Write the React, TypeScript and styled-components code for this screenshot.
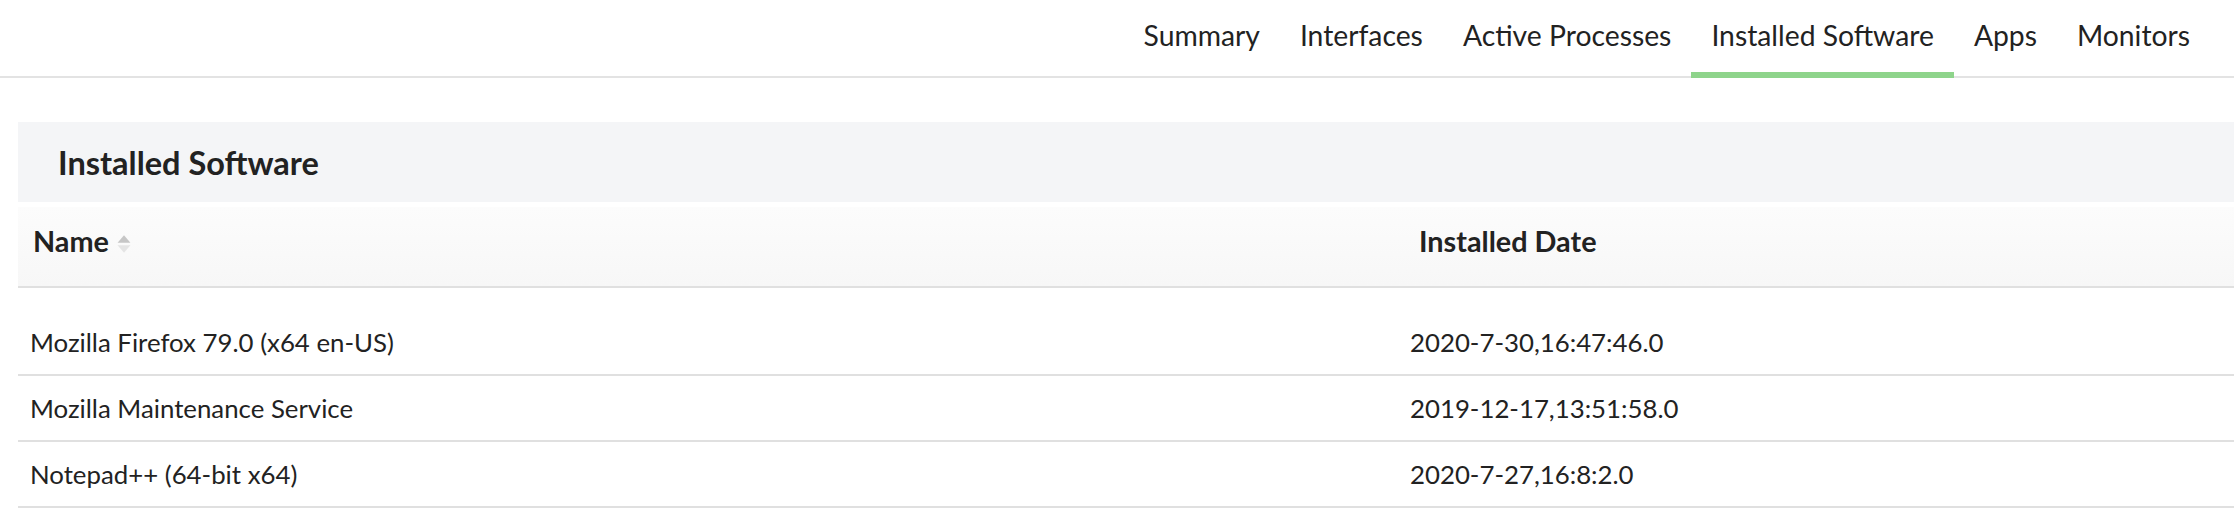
import React from "react";
import styled, { createGlobalStyle } from "styled-components";

const GlobalStyle = createGlobalStyle`
  body {
    margin: 0;
    background: #fff;
    font-family: Lato, "Open Sans", sans-serif;
    color: #222;
  }
`;

const tabs = ["Summary", "Interfaces", "Active Processes", "Installed Software", "Apps", "Monitors"];

const software = [
  { name: "Mozilla Firefox 79.0 (x64 en-US)", date: "2020-7-30,16:47:46.0" },
  { name: "Mozilla Maintenance Service", date: "2019-12-17,13:51:58.0" },
  { name: "Notepad++ (64-bit x64)", date: "2020-7-27,16:8:2.0" },
];

const SortIcon = () => (
  <SortSvg viewBox="0 0 12 20" aria-hidden>
    <path d="M6 2.5 L11.5 9 L0.5 9 Z" fill="#c6c6c6" />
    <path d="M0.5 11 L11.5 11 L6 17.5 Z" fill="#e4e4e4" />
  </SortSvg>
);

const App = () => {
  return (
    <>
      <GlobalStyle />
      <Nav>
        {tabs.map((t) => (
          <Tab key={t} $active={t === "Installed Software"}>
            {t}
          </Tab>
        ))}
      </Nav>
      <Content>
        <PanelHeader>Installed Software</PanelHeader>
        <Table>
          <HeadRow>
            <HeadCell>
              Name
              <SortIcon />
            </HeadCell>
            <HeadCell>Installed Date</HeadCell>
          </HeadRow>
          <Body>
            {software.map((s) => (
              <Row key={s.name}>
                <Cell>{s.name}</Cell>
                <Cell $narrow>{s.date}</Cell>
              </Row>
            ))}
          </Body>
        </Table>
      </Content>
    </>
  );
};

export default App;

const Nav = styled.nav`
  display: flex;
  justify-content: flex-end;
  height: 76px;
  padding-right: 24px;
  border-bottom: 2px solid #e3e3e3;
`;

const Tab = styled.div<{ $active?: boolean }>`
  display: flex;
  align-items: center;
  box-sizing: border-box;
  height: 78px;
  margin-bottom: -2px;
  padding: 0 20px 2px;
  font-size: 28.3px;
  color: #222;
  border-bottom: 6px solid ${(p) => (p.$active ? "#8ed48b" : "transparent")};
`;

const Content = styled.main`
  padding: 44px 0 0 18px;
`;

const PanelHeader = styled.h2`
  margin: 0;
  height: 80px;
  display: flex;
  align-items: center;
  padding-left: 40px;
  background: #f4f5f7;
  font-size: 32.5px;
  font-weight: 700;
  color: #222;
`;

const Table = styled.div`
  margin-top: 5px;
`;

const Columns = styled.div`
  display: grid;
  grid-template-columns: 1386px 1fr;
  align-items: center;
`;

const HeadRow = styled(Columns)`
  box-sizing: border-box;
  height: 81px;
  padding-bottom: 12px;
  background: linear-gradient(#fcfcfc, #f7f7f7);
  border-bottom: 2px solid #e0e0e0;
`;

const HeadCell = styled.div`
  display: flex;
  align-items: center;
  padding-left: 15px;
  font-size: 28.8px;
  font-weight: 700;
  color: #222;
`;

const SortSvg = styled.svg`
  width: 14px;
  height: 24px;
  margin-left: 8px;
  margin-top: 6px;
`;

const Body = styled.div`
  padding-top: 22px;
`;

const Row = styled(Columns)`
  height: 64px;
  border-bottom: 2px solid #e0e0e0;
`;

const Cell = styled.div<{ $narrow?: boolean }>`
  padding-left: ${(p) => (p.$narrow ? "6px" : "12px")};
  font-size: 25.8px;
  color: #222;
`;
